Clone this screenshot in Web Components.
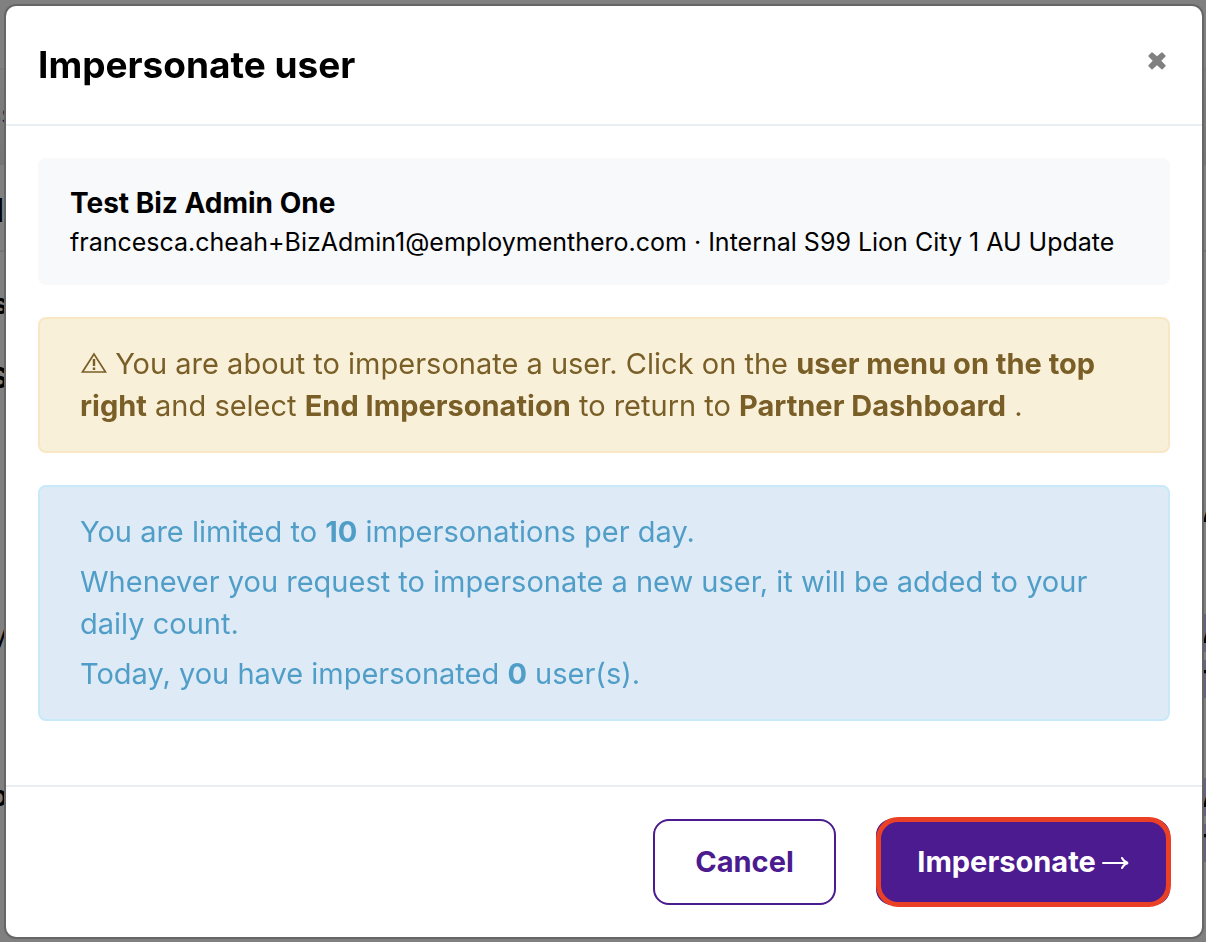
<!DOCTYPE html>
<html lang="en">
<head>
<meta charset="utf-8">
<title>Impersonate user</title>
<style>
html, body { margin: 0; min-height: 100%; }
body { font-family: Inter, "Noto Sans", sans-serif; color: #000; background: #808080; }
</style>
</head>
<body>
<dimmed-page></dimmed-page>
<modal-dialog>
  <span slot="title">Impersonate user</span>
  <user-card>
    <span slot="name">Test Biz Admin One</span>
    <span slot="detail">francesca.cheah+BizAdmin1@employmenthero.com · Internal S99 Lion City 1 AU Update</span>
  </user-card>
  <alert-box kind="warning">
    <p><warning-icon></warning-icon> You are about to impersonate a user. Click on the <strong>user menu on the top right</strong> and select <strong>End Impersonation</strong> to return to <strong>Partner Dashboard</strong> .</p>
  </alert-box>
  <alert-box kind="info">
    <p>You are limited to <strong>10</strong> impersonations per day.</p>
    <p>Whenever you request to impersonate a new user, it will be added to your daily count.</p>
    <p>Today, you have impersonated <strong>0</strong> user(s).</p>
  </alert-box>
  <action-button slot="actions">Cancel</action-button>
  <action-button slot="actions" primary>Impersonate</action-button>
</modal-dialog>
<script>
function define(name, html) {
  customElements.define(name, class extends HTMLElement {
    constructor() {
      super();
      const t = document.createElement('template');
      t.innerHTML = html;
      this.attachShadow({ mode: 'open' }).append(t.content.cloneNode(true));
    }
  });
}

// The page behind the modal, seen only as slivers at its edges
define('dimmed-page', `
<style>
:host { position: fixed; inset: 0; z-index: -1; display: flex; justify-content: space-between; overflow: hidden;
  background: linear-gradient(#808080 68px, #797979 68px, #797979 70px, #7e7e7e 70px, #747676 165px, #808080 165px, #808080 250px, #747474 250px, #747474 252px, #808080 252px); }
div { display: flex; flex-direction: column; width: 8px; }
.right { width: 4px; }
span { display: flex; flex: none; align-items: center; justify-content: flex-end; height: 40px; font-size: 28px; }
.right span { justify-content: flex-start; }
b { font-weight: 700; }
.link { margin: 94px -8px 0 0; color: #200a45; }
.head { margin-top: 56px; padding-right: 4px; font-size: 32px; }
.g1 { margin-top: 54px; } .g2 { margin-top: 34px; } .g3 { margin-top: 216px; } .g4 { margin-top: 122px; }
.a1 { margin-top: 492px; }
.tag { height: 38px; margin-top: 8px; background: #6b6080; font-weight: 700; }
.t1 { margin-top: 82px; } .t2 { margin-top: 80px; }
.dash { align-items: flex-start; line-height: 20px; }
</style>
<div aria-hidden="true"><span class="link">ss</span><span class="head"><b>I</b></span><span class="g1"><b>s</b></span><span class="g2"><b>S</b></span><span class="g3">y</span><span class="g4"><b>o</b></span></div>
<div class="right" aria-hidden="true"><span class="a1"><b>A</b></span><span class="tag t1">A</span><span class="tag dash">—</span><span class="tag t2">A</span><span class="tag dash">—</span></div>`);

define('modal-dialog', `
<style>
:host { display: block; padding: 6px 4px 5px 6px; }
section { background: #fff; border-radius: 10px; box-shadow: 0 0 0 2px #666; }
header { display: flex; justify-content: space-between; align-items: flex-start; padding: 32px; border-bottom: 2px solid #e9eef2; }
h1 { margin: 0; font-size: 37px; line-height: 54px; font-weight: 700; }
.close { display: flex; margin: 12px 2px; padding: 0; border: 0; background: none; }
svg { width: 22px; height: 22px; fill: #808080; }
main { display: flex; flex-direction: column; gap: 32px; padding: 32px 32px 64px; }
footer { display: flex; justify-content: flex-end; gap: 40px; padding: 32px; border-top: 2px solid #e9eef2; }
</style>
<section role="dialog" aria-modal="true" aria-labelledby="t">
<header><h1 id="t"><slot name="title"></slot></h1>
<button class="close" aria-label="Close"><svg viewBox="0 0 22 22"><path d="M6.500 2.400 11 6.300l4.500-3.900q.5-.4 1 0l3 3q.5.5 0 1L15.300 10.800l4.200 4.500q.5.5 0 1l-3 3q-.5.5-1 0L11 15.300l-4.500 4q-.5.5-1 0l-3-3q-.5-.5 0-1L6.700 10.800 2.500 6.400q-.5-.5 0-1l3-3q.5-.4 1 0Z"/></svg></button></header>
<main><slot></slot></main>
<footer><slot name="actions"></slot></footer>
</section>`);

define('user-card', `
<style>
:host { display: block; padding: 24px 32px; background: #f8f9fb; border-radius: 8px; }
.name { font-size: 28px; line-height: 42px; font-weight: 700; }
.detail { font-size: 25px; line-height: 37px; }
</style>
<div class="name"><slot name="name"></slot></div>
<div class="detail"><slot name="detail"></slot></div>`);

define('alert-box', `
<style>
:host { display: flex; flex-direction: column; gap: 8px; padding: 24px 40px; border: 2px solid; border-radius: 8px; font-size: 29px; line-height: 42px; }
:host([kind=warning]) { background: #f9f0d9; border-color: #f8e7c5; color: #795f27; }
:host([kind=info]) { background: #deebf6; border-color: #c7e9f9; color: #509ec8; }
::slotted(p) { margin: 0; }
</style><slot></slot>`);

define('warning-icon', `
<style>:host { display: inline-block; } svg { display: block; width: 27px; height: 22px; fill: none; stroke: currentColor; stroke-width: 2; }</style>
<svg viewBox="0 0 27 22" aria-hidden="true"><path d="M14 2 2.500 20h23Z" stroke-width="1.700"/><path d="M14 7v7M14 15.500v2.500" stroke-width="2.400"/></svg>`);

customElements.define('action-button', class extends HTMLElement {
  constructor() {
    super();
    const arrow = this.hasAttribute('primary')
      ? '<svg viewBox="0 0 27 14" aria-hidden="true"><path d="M1 8h24M20 3q2 4 6 5-4 1-6 5"/></svg>' : '';
    this.attachShadow({ mode: 'open' }).innerHTML = `
<style>
:host { display: block; position: relative; }
button { display: flex; align-items: center; justify-content: center; gap: 6px; height: 86px; min-width: 183px; padding: 0 32px; font: 700 29px/42px Inter, "Noto Sans", sans-serif;
  color: #4b1b8f; background: #fff; border: 2px solid #4b1b8f; border-radius: 16px; }
:host([primary]) button { min-width: 294px; color: #fff; background: #4b1b8f; }
:host([primary])::after { content: ""; position: absolute; inset: -2px -1px -2px 0; border: 5px solid #ea4025; border-radius: 22px; pointer-events: none; }
svg { width: 27px; height: 14px; fill: none; stroke: currentColor; stroke-width: 2; stroke-linecap: round; }
</style><button><slot></slot>${arrow}</button>`;
  }
});
</script>
</body>
</html>
